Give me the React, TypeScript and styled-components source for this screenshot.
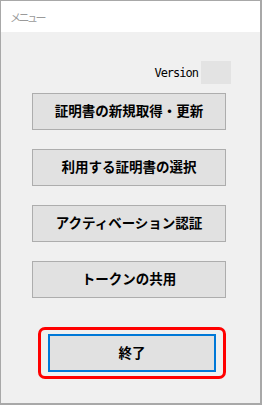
import * as React from "react";
import styled, { createGlobalStyle } from "styled-components";

const GlobalStyle = createGlobalStyle`
  html, body {
    margin: 0;
    padding: 0;
    background: #f0f0f0;
  }
`;

const Window = styled.div`
  width: 262px;
  height: 405px;
  box-sizing: border-box;
  border-style: solid;
  border-color: #a8a8a8;
  border-width: 1px 2px 2px 1px;
  display: flex;
  flex-direction: column;
  background: #f0f0f0;
  font-family: "Noto Sans CJK JP", "Noto Sans", sans-serif;
`;

const TitleBar = styled.div`
  height: 31px;
  flex-shrink: 0;
  background: #ffffff;
  display: flex;
  align-items: center;
  padding-left: 9px;
  color: #9a9a9a;
  font-size: 11px;
  letter-spacing: -2.5px;
`;

const Body = styled.div`
  flex: 1;
  display: flex;
  flex-direction: column;
  padding: 29px 0 0 31px;
`;

const VersionRow = styled.div`
  width: 199px;
  height: 23px;
  display: flex;
  justify-content: flex-end;
  align-items: center;
  gap: 3px;
  font-family: "DejaVu Sans Mono", "Liberation Mono", monospace;
  font-size: 12px;
  letter-spacing: -1px;
  color: #000;
`;

const VersionBox = styled.div`
  width: 30px;
  height: 23px;
  background: #e3e3e3;
`;

const ButtonList = styled.div`
  display: flex;
  flex-direction: column;
  gap: 19px;
  margin-top: 9px;
`;

const MenuButton = styled.button<{ $focused?: boolean }>`
  width: ${p => (p.$focused ? "168px" : "194px")};
  height: ${p => (p.$focused ? "38px" : "37px")};
  box-sizing: border-box;
  background: #e1e1e1;
  border: ${p => (p.$focused ? "2px solid #0078d7" : "1px solid #adadad")};
  font-family: "Noto Sans CJK JP", sans-serif;
  font-weight: 700;
  font-size: 13.5px;
  color: #000;
  padding: 0 0 3px;
  margin: 0;
  display: flex;
  align-items: center;
  justify-content: center;
`;

const Highlight = styled.div`
  align-self: flex-start;
  margin: 29px 0 0 6px;
  padding: 4px 7px;
  border: 3px solid #ff0000;
  border-radius: 7px;
`;

const items = [
  "証明書の新規取得・更新",
  "利用する証明書の選択",
  "アクティベーション認証",
  "トークンの共用",
];

export default function App() {
  return (
    <>
      <GlobalStyle />
      <Window>
        <TitleBar>メニュー</TitleBar>
        <Body>
          <VersionRow>
            Version
            <VersionBox />
          </VersionRow>
          <ButtonList>
            {items.map(label => (
              <MenuButton key={label}>{label}</MenuButton>
            ))}
          </ButtonList>
          <Highlight>
            <MenuButton $focused>終了</MenuButton>
          </Highlight>
        </Body>
      </Window>
    </>
  );
}
